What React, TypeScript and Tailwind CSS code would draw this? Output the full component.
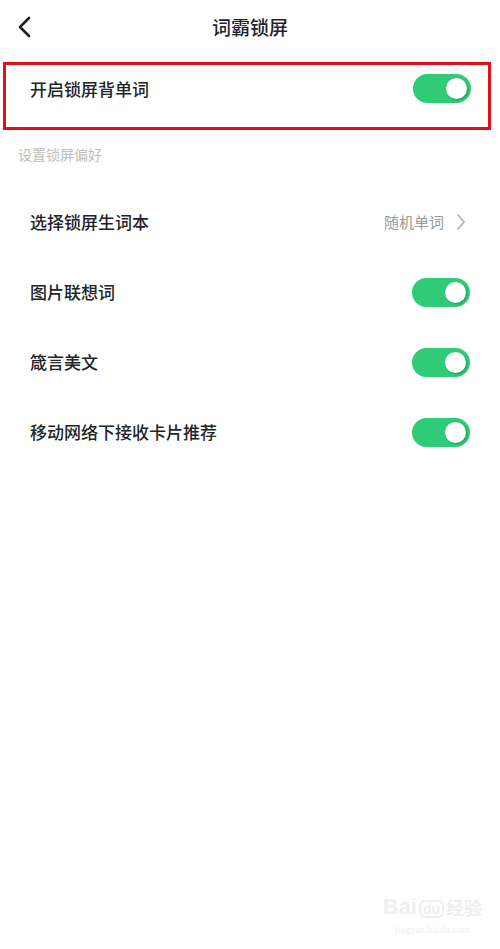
import React, { useState } from "react";

const font = { fontFamily: '"Noto Sans CJK SC", "Noto Sans", sans-serif' };

function Toggle({ on, onChange }: { on: boolean; onChange: () => void }) {
    return (
        <button
            onClick={onChange}
            className={`relative h-[29px] w-[58px] rounded-full ${on ? "bg-[#2fcb76]" : "bg-[#d9d9d9]"}`}
        >
            <span
                className={`absolute top-[4px] h-[21px] w-[21px] rounded-full bg-white shadow-[1px_1px_2px_rgba(0,100,50,0.45)] ${on ? "left-[33px]" : "left-[4px]"}`}
            />
        </button>
    );
}

function Row({ label, children }: { label: string; children: React.ReactNode }) {
    return (
        <div className="flex h-[70px] items-center justify-between pl-[30px] pr-[30px]">
            <span className="text-[17px] font-medium text-[#222428]">{label}</span>
            {children}
        </div>
    );
}

export default function App() {
    const [lock, setLock] = useState(true);
    const [pic, setPic] = useState(true);
    const [quote, setQuote] = useState(true);
    const [mobile, setMobile] = useState(true);

    return (
        <div className="relative h-[949px] w-[500px] overflow-hidden bg-white" style={font}>
            {/* 顶栏 */}
            <header className="relative flex h-[54px] items-center justify-center">
                <button className="absolute left-[16px] top-[15px]">
                    <svg width="18" height="24" viewBox="0 0 18 24" fill="none">
                        <path d="M13 3 L4 12 L13 21" stroke="#1c1f26" strokeWidth="2.6" strokeLinecap="round" strokeLinejoin="round" />
                    </svg>
                </button>
                <h1 className="text-[19px] font-medium text-[#1e2430]">词霸锁屏</h1>
            </header>

            {/* 开启锁屏 */}
            <div className="mx-[3px] mt-[8px] w-[488px] border-[3px] border-[#e3101a]">
                <div className="flex h-[62px] items-start justify-between pl-[24px] pr-[17px] pt-[9px]">
                    <span className="text-[17px] font-medium leading-[29px] text-[#222428]">开启锁屏背单词</span>
                    <Toggle on={lock} onChange={() => setLock(!lock)} />
                </div>
            </div>

            <div className="mt-[14px] pl-[18px] text-[14px] text-[#bdbdbd]">设置锁屏偏好</div>

            <div className="mt-[22px]">
                <Row label="选择锁屏生词本">
                    <div className="flex items-center gap-[12px] pr-[4px]">
                        <span className="text-[15px] text-[#9a9a9a]">随机单词</span>
                        <svg width="10" height="18" viewBox="0 0 10 18" fill="none">
                            <path d="M2 2 L8 9 L2 16" stroke="#b5b5b5" strokeWidth="1.8" strokeLinecap="round" strokeLinejoin="round" />
                        </svg>
                    </div>
                </Row>
                <Row label="图片联想词">
                    <Toggle on={pic} onChange={() => setPic(!pic)} />
                </Row>
                <Row label="箴言美文">
                    <Toggle on={quote} onChange={() => setQuote(!quote)} />
                </Row>
                <Row label="移动网络下接收卡片推荐">
                    <Toggle on={mobile} onChange={() => setMobile(!mobile)} />
                </Row>
            </div>

            {/* 水印 */}
            <div className="absolute bottom-[12px] right-[18px] flex flex-col items-center text-[#efefef]">
                <div className="flex items-end gap-[2px] text-[22px] font-bold leading-none" style={{ fontFamily: '"Liberation Sans", "Noto Sans CJK SC", sans-serif' }}>
                    <span>Bai</span>
                    <span className="rounded-[6px] border-[2px] border-[#efefef] px-[2px] text-[14px]">du</span>
                    <span className="text-[18px]">经验</span>
                </div>
                <div className="mt-[4px] text-[10px]" style={{ fontFamily: '"Liberation Serif", serif' }}>jingyan.baidu.com</div>
            </div>
        </div>
    );
}
